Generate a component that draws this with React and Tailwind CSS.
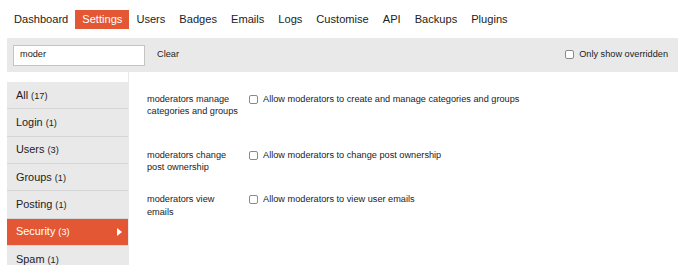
import React from "react";

const navItems = ["Dashboard", "Settings", "Users", "Badges", "Emails", "Logs", "Customise", "API", "Backups", "Plugins"];
const cats = [
  ["All", 17],
  ["Login", 1],
  ["Users", 3],
  ["Groups", 1],
  ["Posting", 1],
  ["Security", 3],
  ["Spam", 1],
];

function Box() {
  return <span className="inline-block w-[9px] h-[9px] border border-[#8a8a8a] rounded-[2px] bg-white shrink-0" />;
}

function Row({ label, text, className }) {
  return (
    <div className={"flex " + className}>
      <div className="w-[94px] text-[9.2px] leading-[12.3px] text-[#222]">{label}</div>
      <div className="ml-[8px] flex items-start">
        <div className="h-[12.3px] flex items-center"><Box /></div>
        <span className="ml-[5px] text-[9.2px] leading-[12.3px] text-[#222]">{text}</span>
      </div>
    </div>
  );
}

export default function App() {
  return (
    <div className="w-[690px] h-[265px] overflow-hidden bg-white pl-[7px] pr-[12px] text-[#222]" style={{ fontFamily: '"Liberation Sans", Arial, sans-serif' }}>
      <div className="flex pt-[10px]">
        {navItems.map((n) => (
          <div
            key={n}
            className={
              "h-[19px] leading-[19px] px-[7px] text-[11.1px] " +
              (n === "Settings" ? "bg-[#e45735] text-white" : "text-[#222]")
            }
          >
            {n}
          </div>
        ))}
      </div>
      <div className="mt-[9px] h-[34px] bg-[#e9e9e9] flex items-center pl-[6px] pr-[10px]">
        <div className="w-[132px] h-[21px] bg-white border border-[#c4c4c4] flex items-center pl-[6px] text-[9.2px] text-[#222]">
          moder
        </div>
        <span className="ml-[12px] text-[9.2px] text-[#222]">Clear</span>
        <div className="ml-auto flex items-center">
          <Box />
          <span className="ml-[5px] text-[9.2px] text-[#222]">Only show overridden</span>
        </div>
      </div>
      <div className="flex">
        <div className="w-[122px] border-r border-[#e9e9e9] pt-[10px] h-[200px]">
          {cats.map(([name, count]) => {
            const active = name === "Security";
            return (
              <div
                key={name}
                className={
                  "relative h-[27.33px] flex items-center pl-[9px] border-b " +
                  (active ? "bg-[#e45735] text-white border-[#d9d9d9]" : "bg-[#e9e9e9] text-[#222] border-[#d6d6d6]")
                }
              >
                <span className="text-[10.9px] leading-[14px]">
                  {name}
                  <span className="ml-[3px] text-[9.2px]">({count})</span>
                </span>
                {active && (
                  <span className="absolute right-[6px] top-1/2 -translate-y-1/2 w-0 h-0 border-y-[4.5px] border-y-transparent border-l-[5px] border-l-white" />
                )}
              </div>
            );
          })}
        </div>
        <div className="flex-1 pl-[18px] pt-[21px]">
          <Row
            className="mb-[31.4px]"
            label="moderators manage categories and groups"
            text="Allow moderators to create and manage categories and groups"
          />
          <Row
            className="mb-[19.7px]"
            label="moderators change post ownership"
            text="Allow moderators to change post ownership"
          />
          <Row label="moderators view emails" text="Allow moderators to view user emails" />
        </div>
      </div>
    </div>
  );
}
